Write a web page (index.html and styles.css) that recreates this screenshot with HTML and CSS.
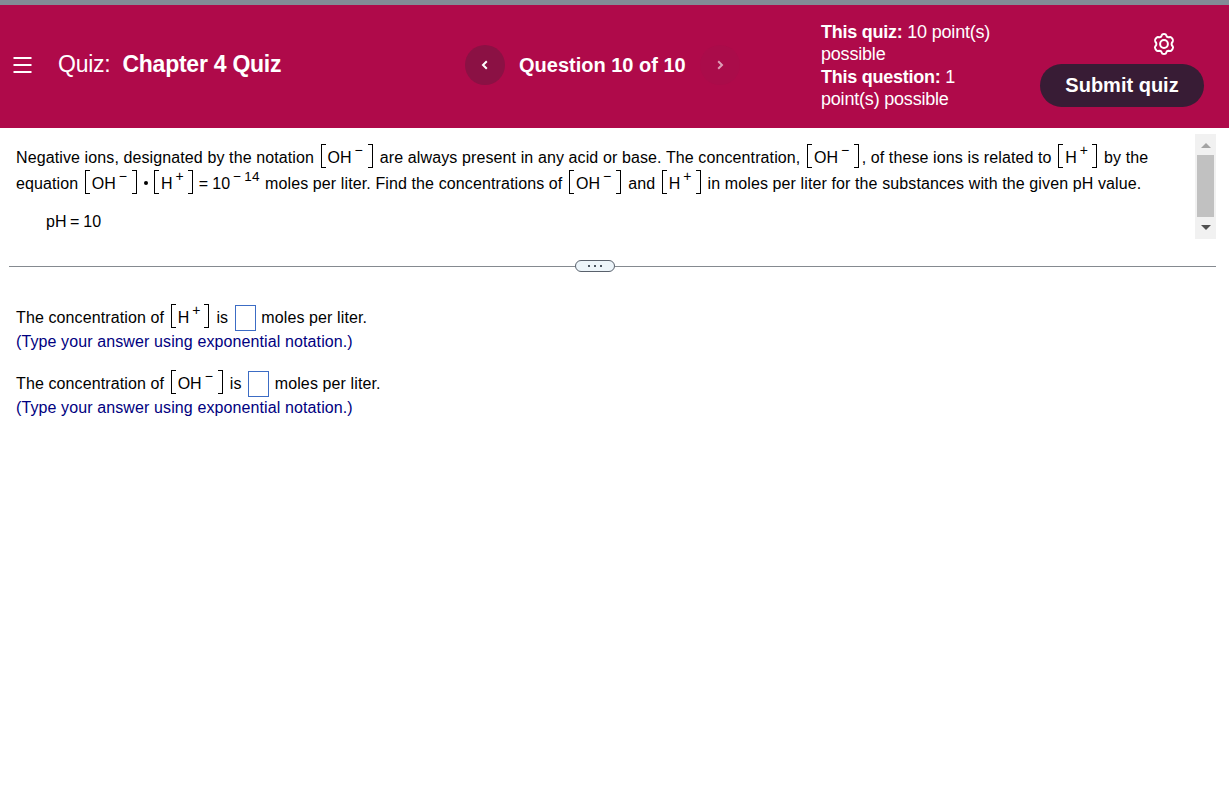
FILE: index.html
```
<!DOCTYPE html>
<html lang="en">
<head>
    <meta charset="UTF-8">
    <meta name="viewport" content="width=device-width, initial-scale=1.0">
    <title>Chapter 4 Quiz</title>
    <link rel="stylesheet" href="styles.css">
</head>
<body>
    <!-- Header -->
    <header class="quiz-header">
        <button class="menu-btn" aria-label="Menu">
            <svg width="19" height="18" viewBox="0 0 19 18"><path d="M0.5 2H18.5M0.5 9H18.5M0.5 16H18.5" /></svg>
        </button>
        <h1 class="quiz-title"><span class="quiz-label">Quiz:</span><span class="quiz-name">Chapter 4 Quiz</span></h1>
        <nav class="question-nav">
            <button class="nav-btn" aria-label="Previous">
                <svg width="8" height="10" viewBox="0 0 8 10"><path d="M5.8 1.2L2 5L5.8 8.8" /></svg>
            </button>
            <span class="question-count">Question 10 of 10</span>
            <button class="nav-btn disabled" aria-label="Next">
                <svg width="8" height="10" viewBox="0 0 8 10"><path d="M2.2 1.2L6 5L2.2 8.8" /></svg>
            </button>
        </nav>
        <div class="points">
            <div><b>This quiz:</b> 10 point(s)</div>
            <div>possible</div>
            <div><b>This question:</b> 1</div>
            <div>point(s) possible</div>
        </div>
        <div class="actions">
            <button class="settings-btn" aria-label="Settings">
                <svg width="24" height="24" viewBox="0 0 24 24">
                    <path d="M9.8 3.2Q10 2 12 2Q14 2 14.2 3.2Q14.6 5 16.2 5.2L18.3 4.9Q19.4 5 20.4 6.8Q21.5 8.7 20.8 9.5Q19.6 10.7 19.6 12Q19.6 13.3 20.8 14.5Q21.5 15.3 20.4 17.2Q19.4 19 18.3 19.1L16.2 18.8Q14.6 19 14.2 20.8Q14 22 12 22Q10 22 9.8 20.8Q9.4 19 7.8 18.8L5.7 19.1Q4.6 19 3.6 17.2Q2.5 15.3 3.2 14.5Q4.4 13.3 4.4 12Q4.4 10.7 3.2 9.5Q2.5 8.7 3.6 6.8Q4.6 5 5.7 4.9L7.8 5.2Q9.4 5 9.8 3.2Z" />
                    <circle cx="12" cy="12" r="3.9" />
                </svg>
            </button>
            <button class="submit-btn">Submit quiz</button>
        </div>
    </header>

    <!-- Question -->
    <section class="question">
        <div class="question-text">
            <p>Negative ions, designated by the notation <span class="ion">OH<sup>−</sup></span> are always present in any acid or base. The concentration, <span class="ion">OH<sup>−</sup></span>, of these ions is related to <span class="ion ion-h">H<sup>+</sup></span> by the</p>
            <p>equation <span class="ion">OH<sup>−</sup></span><span class="dot"></span><span class="ion ion-h">H<sup>+</sup></span><span class="equals">=</span>10<sup class="power">−<span>14</span></sup> moles per liter. Find the concentrations of <span class="ion">OH<sup>−</sup></span> and <span class="ion ion-h">H<sup>+</sup></span> in moles per liter for the substances with the given pH value.</p>
            <p class="given">pH<span class="equals">=</span>10</p>
        </div>
        <div class="scrollbar">
            <svg width="10" height="5" viewBox="0 0 10 5"><path d="M0 5L5 0L10 5Z" fill="#a3a3a3" /></svg>
            <div class="thumb"></div>
            <svg width="10" height="5" viewBox="0 0 10 5"><path d="M0 0L5 5L10 0Z" fill="#505050" /></svg>
        </div>
    </section>

    <!-- Divider -->
    <div class="divider">
        <div class="handle"><i></i><i></i><i></i></div>
    </div>

    <!-- Answers -->
    <section class="answers">
        <div class="answer">
            <p>The concentration of <span class="ion ion-h">H<sup>+</sup></span> is <input class="answer-box" type="text"> moles per liter.</p>
            <p class="hint">(Type your answer using exponential notation.)</p>
        </div>
        <div class="answer">
            <p>The concentration of <span class="ion">OH<sup>−</sup></span> is <input class="answer-box" type="text"> moles per liter.</p>
            <p class="hint">(Type your answer using exponential notation.)</p>
        </div>
    </section>
</body>
</html>
```
FILE: styles.css
```
:root {
    --header-bg: #af0a4a;
    --submit-bg: #381c35;
    --hint-color: #000080;
    --box-border: #3c6cc4;
}

*,
*::before,
*::after {
    box-sizing: border-box;
}

body {
    margin: 0;
    font-family: "Liberation Sans", Arial, sans-serif;
    font-size: 16px;
    color: #000;
    background-color: #fff;
}

p {
    margin: 0;
}

button {
    padding: 0;
    border: none;
    background: none;
    color: #fff;
    font-family: inherit;
}

svg {
    display: block;
}

/* Header */
.quiz-header {
    display: flex;
    height: 128px;
    padding-left: 13px;
    border-top: 5px solid #828b96;
    background-color: var(--header-bg);
    color: #fff;
}

.quiz-header svg {
    fill: none;
    stroke: #fff;
    stroke-width: 2;
}

.menu-btn {
    width: 45px;
    height: 119px;
}

.quiz-title {
    display: flex;
    gap: 12px;
    width: 407px;
    margin: 0;
    font-size: 23px;
    line-height: 118px;
    letter-spacing: -0.25px;
    white-space: nowrap;
}

.quiz-label {
    font-weight: normal;
}

.question-nav {
    display: flex;
    align-items: center;
    gap: 14px;
    width: 356px;
    height: 120px;
}

.question-count {
    font-size: 20px;
    font-weight: bold;
    white-space: nowrap;
}

.nav-btn {
    display: flex;
    align-items: center;
    justify-content: center;
    width: 40px;
    height: 40px;
    border-radius: 50%;
    background-color: #8b1144;
}

.nav-btn.disabled {
    background-color: #aa0c4a;
}

.nav-btn.disabled svg {
    opacity: 0.6;
}

.points {
    width: 219px;
    padding-top: 16px;
    font-size: 18px;
    line-height: 22.4px;
    letter-spacing: -0.2px;
    white-space: nowrap;
}

.points b {
    letter-spacing: -0.25px;
}

.actions {
    width: 164px;
    padding-top: 27px;
}

.settings-btn {
    display: block;
    margin: 0 28px 8px auto;
}

.submit-btn {
    width: 164px;
    height: 43px;
    border-radius: 22px;
    background-color: var(--submit-bg);
    font-size: 20px;
    font-weight: bold;
}

/* Question */
.question {
    display: flex;
    justify-content: space-between;
    height: 111px;
    padding: 6px 13px 0 16px;
}

.question-text {
    padding-top: 10px;
    line-height: 26px;
    letter-spacing: 0.11px;
    white-space: nowrap;
}

.question-text p {
    height: 26px;
}

.question-text .given {
    margin: 13px 0 0 30px;
    letter-spacing: 0;
}

/* Square brackets around an ion */
.ion {
    margin: 0 2.5px 0 2px;
    letter-spacing: 0;
}

.ion::before,
.ion::after {
    content: "";
    display: inline-block;
    width: 5px;
    height: 24px;
    margin-right: 2px;
    border: 1px solid #000;
    border-right: none;
    vertical-align: -5px;
}

.ion::after {
    margin: 0 0 0 5px;
    border: 1px solid #000;
    border-left: none;
}

.ion-h::after {
    margin-left: 4px;
}

sup {
    margin-left: 3px;
    font-size: 14px;
    line-height: 0;
    vertical-align: 8px;
}

.dot {
    display: inline-block;
    width: 4px;
    height: 4px;
    margin: 0 4.5px 0 4px;
    border-radius: 50%;
    background-color: #000;
    vertical-align: 4px;
}

.equals {
    margin: 0 4px 0 3.5px;
}

.power {
    margin-right: 1px;
    font-size: 13.5px;
}

.power span {
    margin-left: 3px;
}

/* Scrollbar */
.scrollbar {
    display: flex;
    flex-direction: column;
    align-items: center;
    width: 21px;
    height: 105px;
    padding-top: 9px;
    background-color: #f1f1f1;
}

.thumb {
    width: 17px;
    height: 62px;
    margin: 7px 0 8px;
    background-color: #c1c1c1;
}

/* Divider */
.divider {
    display: flex;
    align-items: center;
    height: 12px;
    margin: 21px 13px 0 9px;
}

.divider::before,
.divider::after {
    content: "";
    flex: 0 0 566px;
    height: 1px;
    background-color: #858a90;
}

.divider::after {
    flex: 1;
}

.handle {
    display: flex;
    align-items: center;
    justify-content: center;
    gap: 4px;
    width: 40px;
    height: 12px;
    border: 1px solid #59616c;
    border-radius: 6px;
    background-color: #edf5fa;
}

.handle i {
    width: 2px;
    height: 2px;
    background-color: #4a5460;
}

/* Answers */
.answers {
    padding: 32px 16px;
}

.answer {
    height: 66px;
    line-height: 26px;
    letter-spacing: 0.11px;
    white-space: nowrap;
}

.answer p {
    height: 28px;
}

.answer-box {
    width: 21px;
    height: 26px;
    margin: 0 1px 0 2px;
    padding: 0;
    border: 1px solid var(--box-border);
    vertical-align: 1px;
}

.answer .hint {
    line-height: 20px;
    color: var(--hint-color);
}
```
